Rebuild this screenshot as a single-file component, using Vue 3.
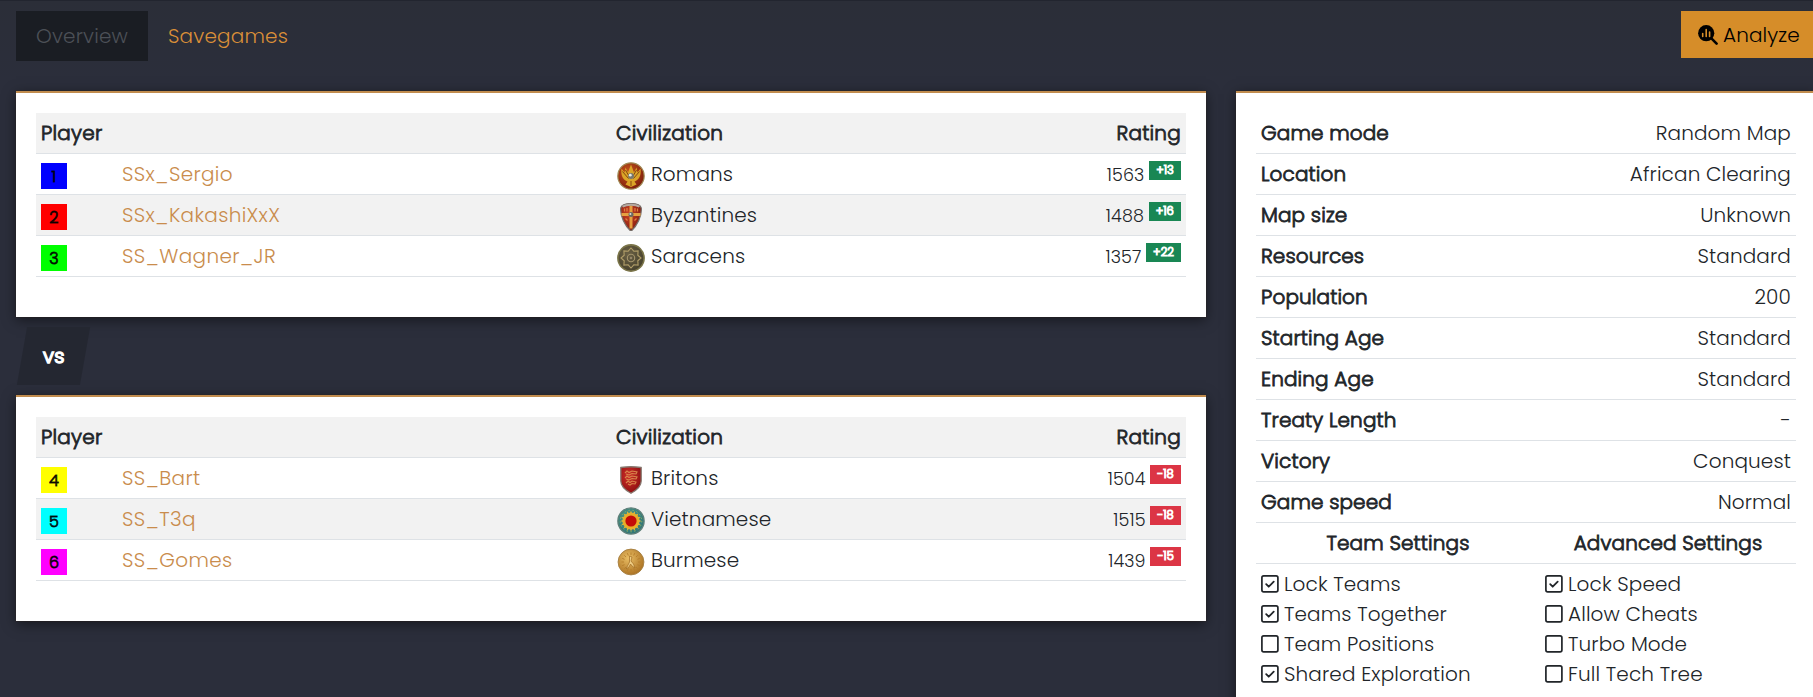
<script setup>
const teams = [
  [
    { n: 1, color: 'blue', name: 'SSx_Sergio', civ: 'Romans', rating: 1563, diff: '+13' },
    { n: 2, color: 'red', name: 'SSx_KakashiXxX', civ: 'Byzantines', rating: 1488, diff: '+16' },
    { n: 3, color: 'lime', name: 'SS_Wagner_JR', civ: 'Saracens', rating: 1357, diff: '+22' },
  ],
  [
    { n: 4, color: 'yellow', name: 'SS_Bart', civ: 'Britons', rating: 1504, diff: '-18' },
    { n: 5, color: 'cyan', name: 'SS_T3q', civ: 'Vietnamese', rating: 1515, diff: '-18' },
    { n: 6, color: 'magenta', name: 'SS_Gomes', civ: 'Burmese', rating: 1439, diff: '-15' },
  ],
]
const settings = [
  ['Game mode', 'Random Map'],
  ['Location', 'African Clearing'],
  ['Map size', 'Unknown'],
  ['Resources', 'Standard'],
  ['Population', '200'],
  ['Starting Age', 'Standard'],
  ['Ending Age', 'Standard'],
  ['Treaty Length', '-'],
  ['Victory', 'Conquest'],
  ['Game speed', 'Normal'],
]
const options = [
  [
    ['Lock Teams', true],
    ['Teams Together', true],
    ['Team Positions', false],
    ['Shared Exploration', true],
  ],
  [
    ['Lock Speed', true],
    ['Allow Cheats', false],
    ['Turbo Mode', false],
    ['Full Tech Tree', false],
  ],
]
const petals = Array.from({ length: 16 }, (_, i) => i * 22.5)
</script>

<template>
  <div class="page">
    <header class="bar">
      <nav class="tabs">
        <a class="tab active">Overview</a>
        <a class="tab">Savegames</a>
      </nav>
      <a class="analyze">
        <svg width="20" height="20" viewBox="0 0 20 20">
          <circle cx="8.2" cy="8.2" r="8.1" />
          <path d="M13.4 13.4 18.6 18.6" stroke="#000" stroke-width="2.6" stroke-linecap="round" />
          <path d="M4.7 8.5v3M8.2 4.5v7M11.6 7v4.5" stroke="#d68d29" stroke-width="1.6" stroke-linecap="round" />
        </svg>
        <span>Analyze</span>
      </a>
    </header>

    <main class="cols">
      <section class="left">
        <template v-for="(team, ti) in teams" :key="ti">
          <div v-if="ti" class="vs"><span>vs</span></div>
          <div class="card">
            <div class="row head">
              <b class="c-player">Player</b>
              <b class="c-civ">Civilization</b>
              <b class="c-rating">Rating</b>
            </div>
            <div v-for="p in team" :key="p.n" class="row">
              <div class="c-num"><span class="swatch" :class="p.color">{{ p.n }}</span></div>
              <a class="c-name">{{ p.name }}</a>
              <div class="c-civ">
                <svg class="civ" width="28" height="28" viewBox="0 0 28 28">
                  <defs>
                    <radialGradient :id="'g' + p.n" cx=".4" cy=".35" r=".7">
                      <stop offset="0" :class="'a' + p.n" />
                      <stop offset="1" :class="'b' + p.n" />
                    </radialGradient>
                  </defs>
                  <g v-if="p.n === 1">
                    <circle cx="14" cy="14" r="13.2" :fill="'url(#g' + p.n + ')'" stroke="#a08a55" stroke-width="1.2" />
                    <path d="M4.500 6.500c-1 7 1.500 11.500 6 13l-2 3 5.500 2.500 5.500-2.500-2-3c4.500-1.500 7-6 6-13l-3 4-1-5-2.500 5-3-8-3 8-2.500-5-1 5z" fill="#dba428" />
                    <path d="M5.500 9.500l6 7M22.500 9.500l-6 7M8.500 8l4 7M19.500 8l-4 7M14 19v5" stroke="#7d3c0b" stroke-width=".9" />
                    <circle cx="14" cy="14" r="2.900" fill="#77776f" /><circle cx="13.300" cy="13.200" r="1.400" fill="#ecece4" />
                  </g>
                  <g v-else-if="p.n === 2">
                    <path d="M14 .6c5 0 9.500 1 10.300 4.500C25 13 20 23 14 28.300 8 23 3 13 3.700 5.100 4.500 1.600 9 .6 14 .6z" :fill="'url(#g' + p.n + ')'" stroke="#77706b" stroke-width="1.200" />
                    <path d="M14 2.500v23M4.500 11.500h19" stroke="#e5a040" stroke-width="3" />
                    <path d="M7.500 5.500v3M10 5v3.500M18 5v3.500M20.500 5.500v3M8.500 15.500l2 2M19.500 15.500l-2 2" stroke="#e2803f" stroke-width="1.200" />
                    <path d="M5.500 3.700C10 1 18 1 22.500 3.700" stroke="#b5aaa2" stroke-width="2" fill="none" />
                    <circle cx="14" cy="11.500" r="2.500" fill="#6b6762" /><circle cx="13.400" cy="10.900" r="1" fill="#ddd" />
                  </g>
                  <g v-else-if="p.n === 3" fill="none">
                    <circle cx="14" cy="14" r="13.100" :fill="'url(#g' + p.n + ')'" stroke="#7a7448" stroke-width="1.600" />
                    <path d="M14 4l2.800 3.200 4.300-.3-.3 4.300L24 14l-3.200 2.800.3 4.300-4.300-.3L14 24l-2.800-3.200-4.300.3.3-4.300L4 14l3.200-2.800-.3-4.300 4.300.3z" stroke="#b09d68" stroke-width="1.100" />
                    <circle cx="14" cy="14" r="3.700" stroke="#a5956c" stroke-width="1.100" />
                    <circle cx="14" cy="14" r="1.300" fill="#94866a" />
                  </g>
                  <g v-else-if="p.n === 4">
                    <path d="M3.800 1.500q10-1.500 20.400 0V15c0 6-6 10-10.200 12.300C9.800 25 3.800 21 3.800 15z" :fill="'url(#g' + p.n + ')'" stroke="#85786f" stroke-width="1.300" />
                    <path d="M8 7l2-2 2 1.500L15 5l5 1-1 2-4-.5-3 1.500-3-1M8 12l2-2 2 1.500 3-1.500 5 1-1 2-4-.5-3 1.500-3-1M9 17l2-2 2 1.500 2-1.500 4 1-1 2-3-.5-2 1.500-2-1" fill="none" stroke="#d9854a" stroke-width="1.100" />
                  </g>
                  <g v-else-if="p.n === 5">
                    <circle cx="14" cy="14" r="13.100" :fill="'url(#g' + p.n + ')'" stroke="#5e7f78" stroke-width="1.400" />
                    <circle cx="14" cy="14" r="10.800" fill="none" stroke="#8fae62" stroke-width="1" stroke-dasharray="1.500 2.500" />
                    <circle cx="14" cy="14" r="8.600" fill="#e9ad28" />
                    <path v-for="a in petals" :key="a" d="M12.800 6.500h2.400L14 3.500z" fill="#dfb337" :transform="`rotate(${a} 14 14)`" />
                    <circle cx="14" cy="14" r="5.600" fill="#c30b08" />
                  </g>
                  <g v-else>
                    <circle cx="14" cy="14" r="12.900" :fill="'url(#g' + p.n + ')'" stroke="#a98346" stroke-width="1" />
                    <path v-for="a in petals" :key="a" d="M14 7V4.500" stroke="#b47c2a" stroke-width=".8" :transform="`rotate(${a} 14 14)`" />
                    <path d="M12.500 8l2.500 1-1 4 2.500 3 1.500 4-3-2-1.500-2-1.500 3-3 2 2-4 1.500-3z" fill="#efce85" stroke="#a06c22" stroke-width=".7" />
                  </g>
                </svg>
                <span>{{ p.civ }}</span>
              </div>
              <div class="c-rating small">
                <span>{{ p.rating }}</span>
                <span class="badge" :class="p.diff[0] === '+' ? 'up' : 'down'">{{ p.diff }}</span>
              </div>
            </div>
          </div>
        </template>
      </section>

      <section class="card info">
        <div v-for="s in settings" :key="s[0]" class="row pair">
          <b>{{ s[0] }}</b>
          <span>{{ s[1] }}</span>
        </div>
        <div class="row duo">
          <b>Team Settings</b>
          <b>Advanced Settings</b>
        </div>
        <div class="duo">
          <ul v-for="(col, ci) in options" :key="ci">
            <li v-for="o in col" :key="o[0]">
              <svg width="18" height="18" viewBox="0 0 18 18" fill="none" stroke="#212529">
                <rect x=".9" y=".9" width="16" height="16" rx="1.800" stroke-width="1.700" />
                <path v-if="o[1]" d="M5.200 9.200l2.500 2.500 5-5" stroke-width="1.800" stroke-linecap="round" stroke-linejoin="round" />
              </svg>
              <span>{{ o[0] }}</span>
            </li>
          </ul>
        </div>
      </section>
    </main>
  </div>
</template>

<style>
body { background: #2b2e3b; overflow: hidden; }
</style>

<style scoped>
* { box-sizing: border-box; }
.page {
  height: 697px; overflow: hidden; padding-left: 16px;
  font: 300 20px/30px Poppins, Inter, "Open Sans", sans-serif;
  letter-spacing: .13px; color: #212529; white-space: nowrap;
  background: linear-gradient(#2b2e38, #2b2e3b 80px); border-top: 1px solid #22252f;
}
.bar { width: 1800px; height: 90px; padding-top: 10px; display: flex; justify-content: space-between; align-items: flex-start; }
.tabs { display: flex; }
.tab { padding: 10px 20px; height: 50px; color: #da8f38; letter-spacing: .18px; }
.tab.active { width: 132px; background: #1a1d23; color: #4c5057; }
.analyze { width: 135px; height: 47px; padding-left: 17px; background: #d68d29; color: #000; display: flex; align-items: center; gap: 5px; }
.cols { display: grid; grid-template-columns: 1190px 580px; gap: 30px; align-items: start; }
.card { background: #fff; border-top: 2px solid #c18c4e; padding: 20px 20px 40px; box-shadow: 0 0 1px #3a2415, 0 3px 12px rgba(0, 0, 0, .5); }
.row { height: 41px; padding: 5px; border-bottom: 1px solid #dee2e6; display: flex; }
.left .row:nth-child(odd) { background: #f2f2f2; }
/* Emboldened light face rather than the heavier cut. */
b, .swatch, .badge, .vs { font-weight: 300; -webkit-text-stroke: .042em currentColor; }
.head b { letter-spacing: .25px; }
.c-player { width: 575px; }
.c-num { width: 81px; }
.c-name { width: 494px; color: #c98c4c; letter-spacing: .33px; }
.c-civ { width: 400px; display: flex; }
.civ { margin: 3px 6.500px 0 .5px; }
.c-rating { flex: 1; text-align: right; }
.small { display: flex; justify-content: flex-end; font-size: 17.5px; padding-top: 1px; }
.badge { margin: 1px 0 0 4.500px; height: 19px; padding: 0 7.200px; font-size: 11.500px; line-height: 19px; color: #fff; letter-spacing: 0; -webkit-text-stroke-width: .09em; }
.up { background: #198754; }
.down { background: #dc3545; }
.swatch { display: block; width: 26px; height: 26px; margin-top: 4px; font-size: 16px; line-height: 27px; text-align: center; color: rgba(0, 0, 0, .8); -webkit-text-stroke-width: .055em; }
.blue { background: #00f; } .red { background: #f00; } .lime { background: #0f0; }
.yellow { background: #ff0; } .cyan { background: #0ff; } .magenta { background: #f0f; }
.vs { width: 63px; height: 58px; margin: 10px 0 10px 6px; background: #242731; transform: skewX(-10deg); display: flex; align-items: center; justify-content: center; color: #fff; letter-spacing: .4px; -webkit-text-stroke-width: .07em; }
.vs span { transform: skewX(10deg); }
.info { height: 640px; }
.pair { justify-content: space-between; }
.duo { display: grid; grid-template-columns: 284px 256px; padding-left: 0; padding-right: 0; }
.duo b { text-align: center; }
ul { list-style: none; margin: 0; padding: 5px; }
li { display: flex; height: 30px; gap: 5px; }
li svg { margin-top: 6px; }
.a1 { stop-color: #c8551b; } .b1 { stop-color: #7a1c0c; }
.a2 { stop-color: #cc4324; } .b2 { stop-color: #7e1a10; }
.a3 { stop-color: #6a6044; } .b3 { stop-color: #45402c; }
.a4 { stop-color: #cf3029; } .b4 { stop-color: #8b0d10; }
.a5 { stop-color: #4f9a86; } .b5 { stop-color: #2d7276; }
.a6 { stop-color: #e9bd63; } .b6 { stop-color: #a96f20; }
</style>
